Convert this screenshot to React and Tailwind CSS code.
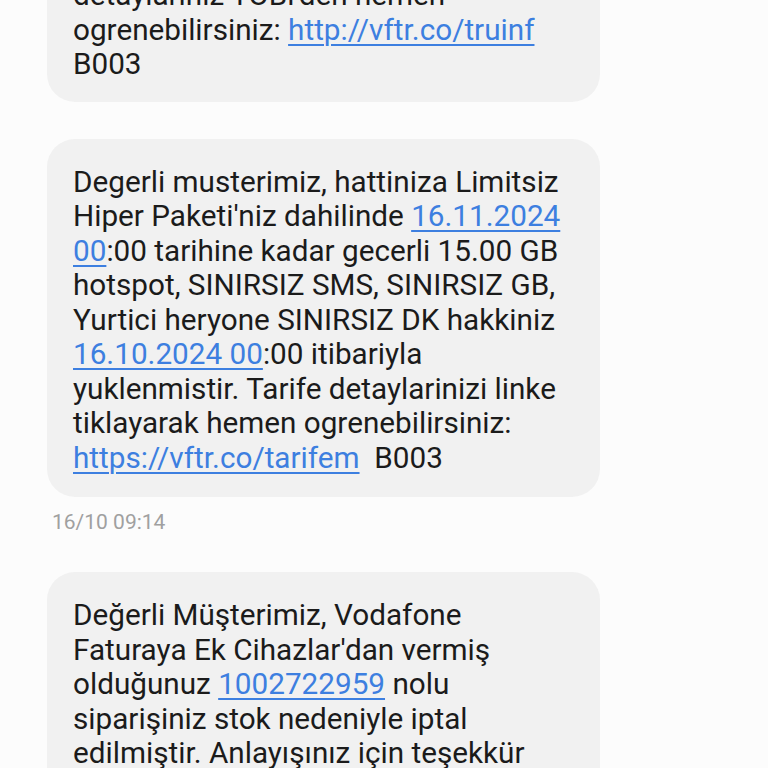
const Link = ({ children }) => (
  <span className="text-[#3d7fe0] underline decoration-[1.5px] underline-offset-[4px]">{children}</span>
);

const Bubble = ({ lines, className = '' }) => (
  <div className={`w-[553px] rounded-[28px] bg-[#f1f1f1] px-[26px] pt-[26px] ${className}`}>
    {lines.map((line, i) => (
      <div key={i} className="whitespace-nowrap leading-[34.5px]">
        {line}
      </div>
    ))}
  </div>
);

export default function App() {
  return (
    <div
      className="min-h-screen overflow-hidden bg-[#fcfcfc] pl-[47px] text-[29.7px] text-[#1b1b1b]"
      style={{ fontFamily: 'Roboto, "Noto Sans", sans-serif' }}
    >
      <Bubble
        className="mt-[-48px] pb-[20px]"
        lines={[
          "detaylariniz TOBi'den hemen",
          <>
            ogrenebilirsiniz: <Link>http://vftr.co/truinf</Link>
          </>,
          'B003',
        ]}
      />
      <Bubble
        className="mt-[37px] pb-[22px]"
        lines={[
          'Degerli musterimiz, hattiniza Limitsiz',
          <>
            Hiper Paketi'niz dahilinde <Link>16.11.2024</Link>
          </>,
          <>
            <Link>00</Link>:00 tarihine kadar gecerli 15.00 GB
          </>,
          'hotspot, SINIRSIZ SMS, SINIRSIZ GB,',
          'Yurtici heryone SINIRSIZ DK hakkiniz',
          <>
            <Link>16.10.2024 00</Link>:00 itibariyla
          </>,
          'yuklenmistir. Tarife detaylarinizi linke',
          'tiklayarak hemen ogrenebilirsiniz:',
          <>
            <Link>https://vftr.co/tarifem</Link>&nbsp; B003
          </>,
        ]}
      />
      <div className="mt-[13px] pl-[5px] text-[21px] leading-[24px] text-[#a0a0a0]">16/10 09:14</div>
      <Bubble
        className="mt-[38px] pt-[25px] pb-[22px]"
        lines={[
          'Değerli Müşterimiz, Vodafone',
          "Faturaya Ek Cihazlar'dan vermiş",
          <>
            olduğunuz <Link>1002722959</Link> nolu
          </>,
          'siparişiniz stok nedeniyle iptal',
          'edilmiştir. Anlayışınız için teşekkür',
          'ederiz.',
        ]}
      />
    </div>
  );
}
